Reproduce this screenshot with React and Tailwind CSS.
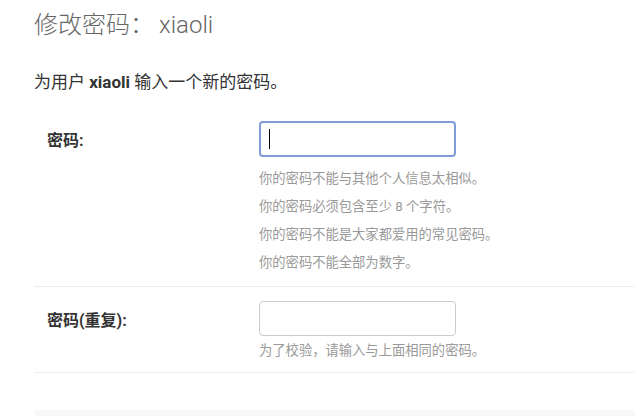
export default function App() {
  const font = { fontFamily: '"Roboto", "Noto Sans CJK SC", "DejaVu Sans", sans-serif' };
  return (
    <div className="min-h-[416px] bg-white overflow-hidden text-[#333]" style={font}>
      <div className="pl-[34px]">
        <h1 className="pt-[10px] text-[24px] leading-[30px] font-light text-[#666]">
          修改密码：<span className="ml-[5px]">xiaoli</span>
        </h1>
        <p className="mt-[30px] text-[17px] leading-[24px] text-[#333]">
          为用户 <strong className="font-bold">xiaoli</strong> 输入一个新的密码。
        </p>

        <div className="mt-[13px] flex border-b border-[#eee] pl-[13px] pt-[14px] pb-[9px]">
          <label className="w-[212px] shrink-0 pt-[6px] text-[16px] leading-[28px] font-bold text-[#333]">
            密码:
          </label>
          <div>
            <div className="w-[197px] h-[36px] rounded-[4px] border-2 border-[#7f9bd8] flex items-center pl-[8px] bg-white">
              <div className="w-[1px] h-[20px] bg-black" />
            </div>
            <ul className="mt-[8px] text-[13.3px] leading-[28px] text-[#999]">
              <li>你的密码不能与其他个人信息太相似。</li>
              <li>你的密码必须包含至少 8 个字符。</li>
              <li>你的密码不能是大家都爱用的常见密码。</li>
              <li>你的密码不能全部为数字。</li>
            </ul>
          </div>
        </div>

        <div className="flex border-b border-[#eee] pl-[13px] pt-[14px] pb-[11px]">
          <label className="w-[212px] shrink-0 pt-[6px] text-[16px] leading-[28px] font-bold text-[#333]">
            密码(重复):
          </label>
          <div>
            <div className="w-[197px] h-[35px] rounded-[4px] border border-[#ccc] bg-white" />
            <p className="mt-[5px] text-[13.3px] leading-[20px] text-[#999]">
              为了校验，请输入与上面相同的密码。
            </p>
          </div>
        </div>

        <div className="mt-[37px] h-[40px] rounded-tl-[4px] bg-[#f8f8f8]" />
      </div>
    </div>
  );
}
